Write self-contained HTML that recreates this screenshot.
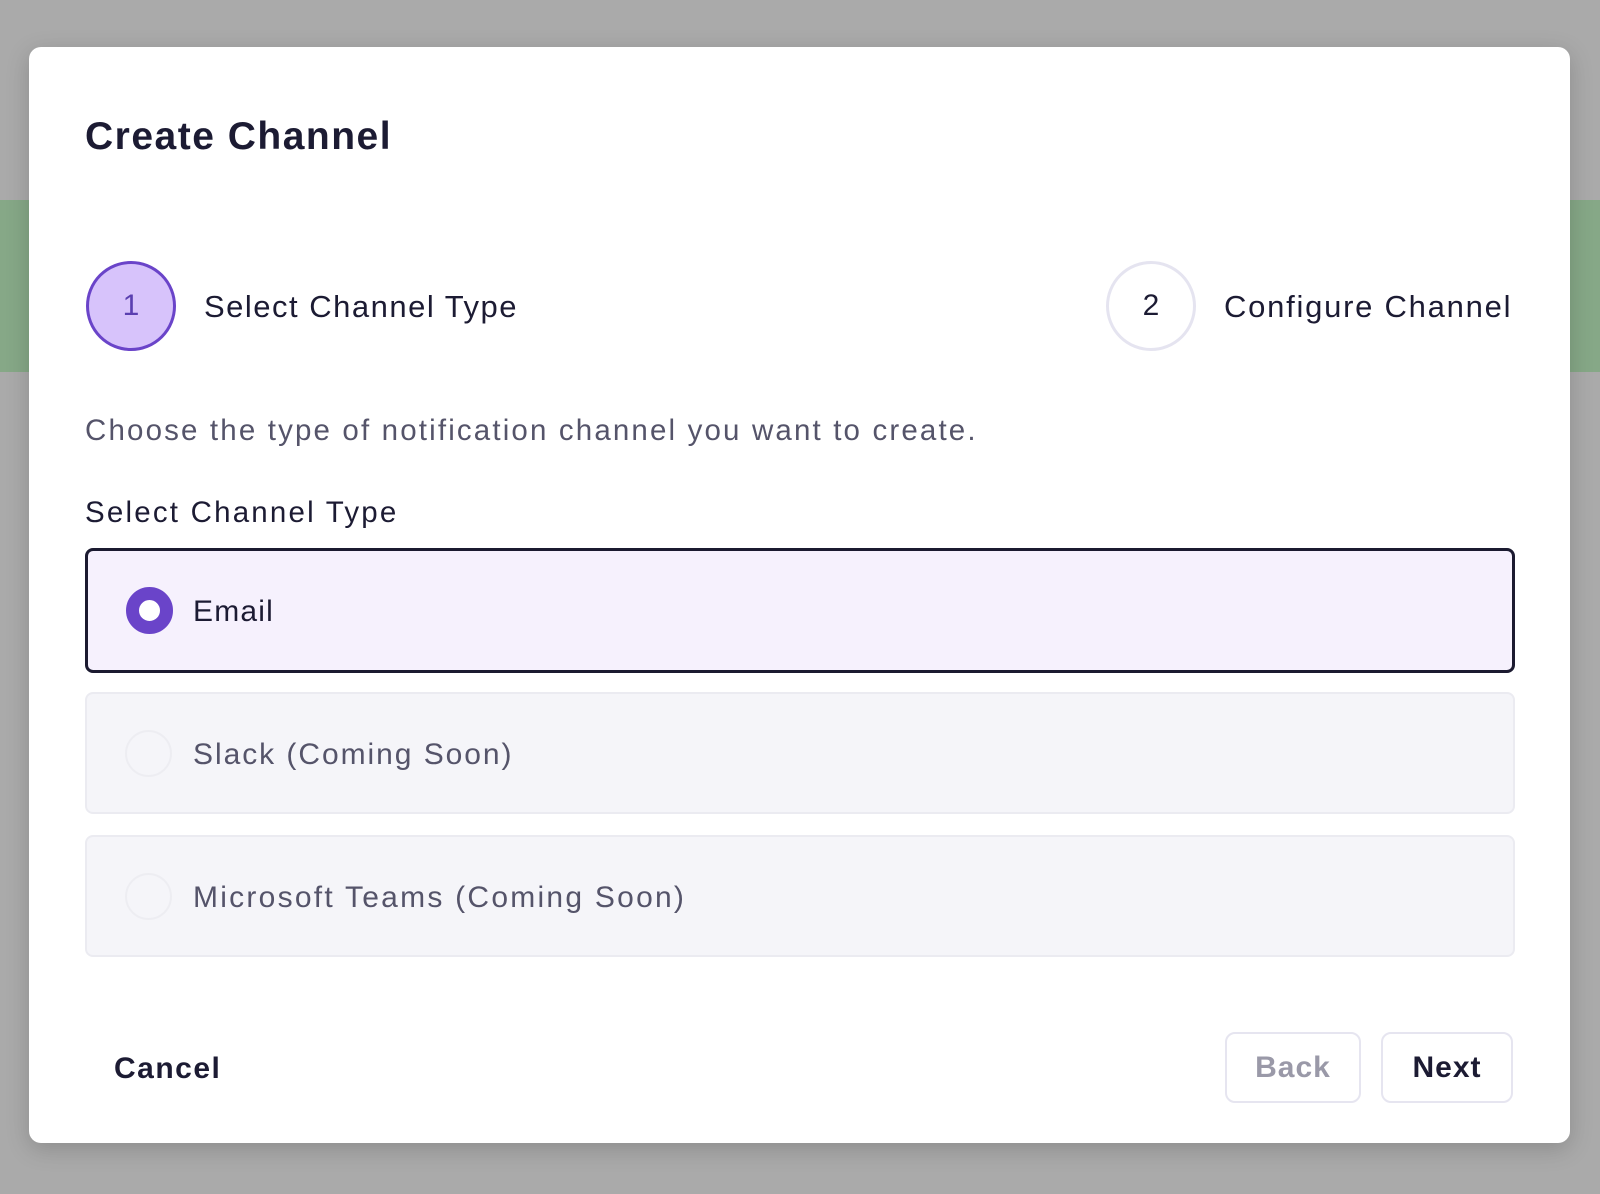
<!DOCTYPE html>
<html><head><meta charset="utf-8"><style>
*{box-sizing:border-box;margin:0;padding:0}
body{width:1600px;height:1194px;background:#aaaaaa;position:relative;overflow:hidden;font-family:"Liberation Sans",sans-serif;color:#1c1b33}
.green{position:absolute;left:0;right:0;top:200px;height:172px;background:#86a887}
.modal{position:absolute;left:29px;top:47px;width:1541px;height:1096px;background:#fff;border-radius:12px;box-shadow:0 6px 24px rgba(0,0,0,.18)}
.a{position:absolute;white-space:nowrap}
.circ{position:absolute;width:90px;height:90px;border-radius:50%;display:flex;align-items:center;justify-content:center;font-size:30px}
.opt{position:absolute;left:56px;width:1430px;border-radius:8px}
.radio{position:absolute;left:38px;width:47px;height:47px;border-radius:50%}
.btn{position:absolute;top:985px;height:71px;border:2px solid #e6e5f0;border-radius:10px;display:flex;align-items:center;justify-content:center;font-size:30px;font-weight:bold}
</style></head><body>
<div class="green"></div>
<div class="modal">
 <div class="a" style="left:56px;top:68px;font-size:39px;font-weight:bold;letter-spacing:1.5px;color:#1c1b33">Create Channel</div>
 <div class="circ" style="left:57px;top:214px;background:#d7c3fb;border:3px solid #6a44c9;color:#5a3fb0">1</div>
 <div class="a" style="left:175px;top:242px;font-size:31px;letter-spacing:1.5px">Select Channel Type</div>
 <div class="circ" style="left:1077px;top:214px;border:3px solid #e5e4f0;color:#1c1b33">2</div>
 <div class="a" style="left:1195px;top:242px;font-size:31px;letter-spacing:1.75px">Configure Channel</div>
 <div class="a" style="left:56px;top:367px;font-size:29.5px;letter-spacing:2.15px;color:#55546a">Choose the type of notification channel you want to create.</div>
 <div class="a" style="left:56px;top:449px;font-size:29.5px;letter-spacing:2.2px">Select Channel Type</div>
 <div class="opt" style="top:501px;height:125px;background:#f6f1fd;border:3px solid #1b1a30">
  <div class="radio" style="top:36px;border:13px solid #6a44c9;background:#fff"></div>
  <div class="a" style="left:105px;top:44px;font-size:30px;letter-spacing:1.2px">Email</div>
 </div>
 <div class="opt" style="top:645px;height:122px;background:#f5f5f9;border:2px solid #ebebf1">
  <div class="radio" style="top:36px;border:2px solid #ededf2"></div>
  <div class="a" style="left:106px;top:44px;font-size:30px;letter-spacing:1.95px;color:#55546a">Slack (Coming Soon)</div>
 </div>
 <div class="opt" style="top:788px;height:122px;background:#f5f5f9;border:2px solid #ebebf1">
  <div class="radio" style="top:36px;border:2px solid #ededf2"></div>
  <div class="a" style="left:106px;top:44px;font-size:30px;letter-spacing:2.25px;color:#55546a">Microsoft Teams (Coming Soon)</div>
 </div>
 <div class="a" style="left:85px;top:1005px;font-size:30px;font-weight:bold;letter-spacing:1.5px">Cancel</div>
 <div class="btn" style="left:1196px;width:136px;color:#9a99a8;letter-spacing:1px">Back</div>
 <div class="btn" style="left:1352px;width:132px;color:#1c1b33;letter-spacing:1px">Next</div>
</div>
</body></html>
